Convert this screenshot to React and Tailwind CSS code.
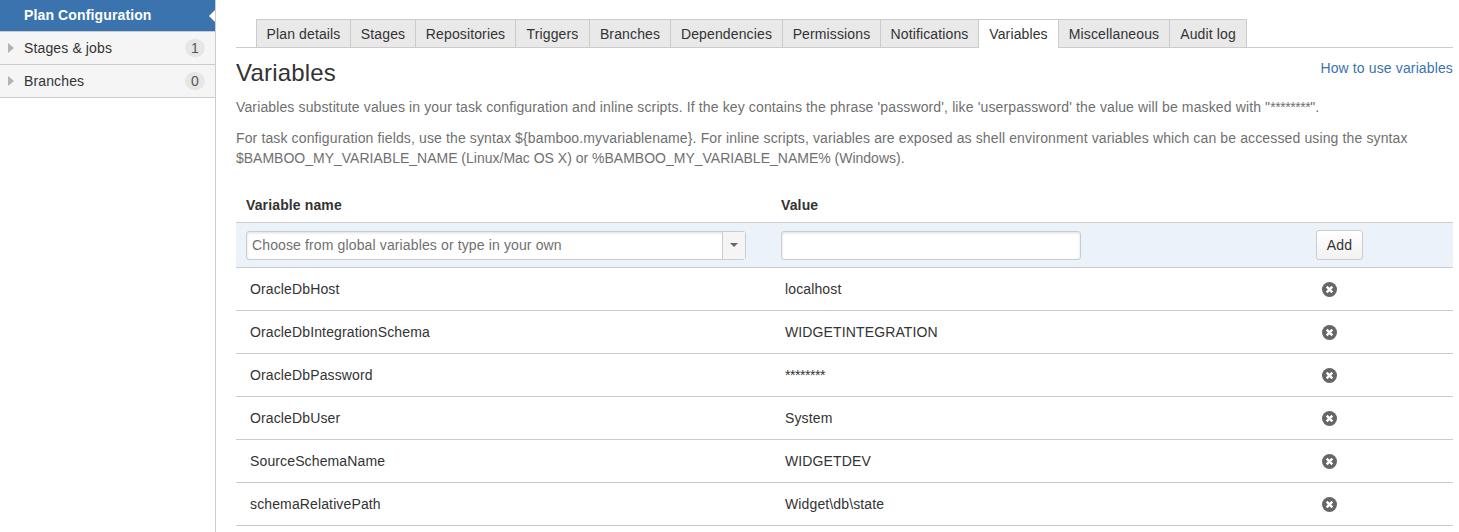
const tabs = [
  { label: "Plan details", width: "w-[95px]" },
  { label: "Stages", width: "w-[66px]" },
  { label: "Repositories", width: "w-[101px]" },
  { label: "Triggers", width: "w-[75px]" },
  { label: "Branches", width: "w-[82px]" },
  { label: "Dependencies", width: "w-[113px]" },
  { label: "Permissions", width: "w-[99px]" },
  { label: "Notifications", width: "w-[99px]" },
  { label: "Variables", width: "w-[81px]" },
  { label: "Miscellaneous", width: "w-[112px]" },
  { label: "Audit log", width: "w-[78px]" },
];

const variables = [
  { name: "OracleDbHost", value: "localhost" },
  { name: "OracleDbIntegrationSchema", value: "WIDGETINTEGRATION" },
  { name: "OracleDbPassword", value: "********", masked: true },
  { name: "OracleDbUser", value: "System" },
  { name: "SourceSchemaName", value: "WIDGETDEV" },
  { name: "schemaRelativePath", value: "Widget\\db\\state" },
];

function SideItem({ label, count }) {
  return (
    <div className="flex h-[33px] items-center border-b border-[#cccccc] bg-[#f5f5f5] pr-[10px]">
      <svg width="7" height="10" viewBox="0 0 7 10" className="ml-[8px] mr-[9px]">
        <path d="M0 0 L6 5 L0 10 Z" fill="#b3b3b3" />
      </svg>
      <span className="flex-1 text-[#333333]">{label}</span>
      <span className="flex h-[18px] w-[20px] items-center justify-center rounded-full bg-[#e6e6e6] text-[#555555]">
        {count}
      </span>
    </div>
  );
}

function DeleteIcon() {
  return (
    <svg width="15" height="15" viewBox="0 0 15 15">
      <circle cx="7.5" cy="7.5" r="7.5" fill="#666666" />
      <path d="M4.7 4.7 L10.3 10.3 M10.3 4.7 L4.7 10.3" stroke="#ffffff" strokeWidth="2.4" />
    </svg>
  );
}

export default function App() {
  return (
    <div className="flex h-[532px] overflow-hidden bg-white font-['Liberation_Sans',Arial,sans-serif] text-[14px] tracking-[0.13px] text-[#333333]">
      <aside className="w-[216px] shrink-0 border-r border-[#cccccc]">
        <div className="relative flex h-[32px] items-center border-b border-[#cccccc] bg-[#3b73af] pl-[24px] font-bold text-white">
          Plan Configuration
          <span className="absolute right-0 top-[10px] h-0 w-0 border-y-[6px] border-r-[6px] border-y-transparent border-r-white" />
        </div>
        <SideItem label="Stages & jobs" count="1" />
        <SideItem label="Branches" count="0" />
      </aside>

      <main className="min-w-0 flex-1 pl-[20px] pr-[6px] pt-[19px]">
        <div className="flex h-[29px] border-b border-[#cccccc] pl-[20px]">
          {tabs.map((tab) =>
            tab.label === "Variables" ? (
              <div
                key={tab.label}
                className={`-mb-px -ml-px flex h-[29px] items-center justify-center border-x border-t border-[#cccccc] bg-white first:ml-0 ${tab.width}`}
              >
                {tab.label}
              </div>
            ) : (
              <div
                key={tab.label}
                className={`-ml-px flex h-[28px] items-center justify-center border-x border-t border-[#cccccc] bg-[#e9e9e9] pt-[2px] first:ml-0 ${tab.width}`}
              >
                {tab.label}
              </div>
            )
          )}
        </div>

        <div className="mt-[11px] flex items-start justify-between">
          <h1 className="text-[24px] leading-[28px] tracking-[0.2px] text-[#333333]">Variables</h1>
          <a className="-mt-px text-[#3b73af]">How to use variables</a>
        </div>

        <p className="mt-[10px] leading-[20px] text-[#707070]">
          Variables substitute values in your task configuration and inline scripts. If the key contains the phrase 'password', like 'userpassword' the value will be masked with "<span className="tracking-[-0.45px]">********</span>".
        </p>
        <p className="mt-[11px] leading-[20px] text-[#707070]">
          For task configuration fields, use the syntax ${"{"}bamboo.myvariablename{"}"}. For inline scripts, variables are exposed as shell environment variables which can be accessed using the syntax
          <br />
          <span className="tracking-normal">$BAMBOO_MY_VARIABLE_NAME (Linux/Mac OS X) or %BAMBOO_MY_VARIABLE_NAME% (Windows).</span>
        </p>

        <div className="mt-[27px] grid h-[27px] grid-cols-[535px_1fr] pl-[10px] font-bold">
          <div>Variable name</div>
          <div>Value</div>
        </div>

        <div className="flex h-[46px] items-center border-y border-[#cccccc] bg-[#ebf2f9]">
          <div className="ml-[10px] flex h-[29px] w-[500px] items-center rounded-[3px] border border-[#cccccc] bg-white shadow-[inset_0_1px_3px_#dddddd]">
            <span className="flex-1 pl-[5px] text-[#707070]">Choose from global variables or type in your own</span>
            <span className="flex h-full w-[23px] items-center justify-center border-l border-[#cccccc] bg-[#f5f5f5]">
              <span className="h-0 w-0 border-x-[4px] border-t-[4px] border-x-transparent border-t-[#666666]" />
            </span>
          </div>
          <div className="ml-[35px] h-[29px] w-[300px] rounded-[3px] border border-[#cccccc] bg-white shadow-[inset_0_1px_3px_#dddddd]" />
          <button className="ml-[235px] h-[30px] w-[47px] rounded-[3px] border border-[#cccccc] bg-linear-to-b from-white to-[#f2f2f2] text-[#333333]">
            Add
          </button>
        </div>

        {variables.map((row) => (
          <div key={row.name} className="flex h-[43px] items-center border-b border-[#cccccc]">
            <div className="w-[549px] pl-[14px]">{row.name}</div>
            <div className={row.masked ? "w-[537px] tracking-[-0.45px]" : "w-[537px]"}>{row.value}</div>
            <DeleteIcon />
          </div>
        ))}
      </main>
    </div>
  );
}
